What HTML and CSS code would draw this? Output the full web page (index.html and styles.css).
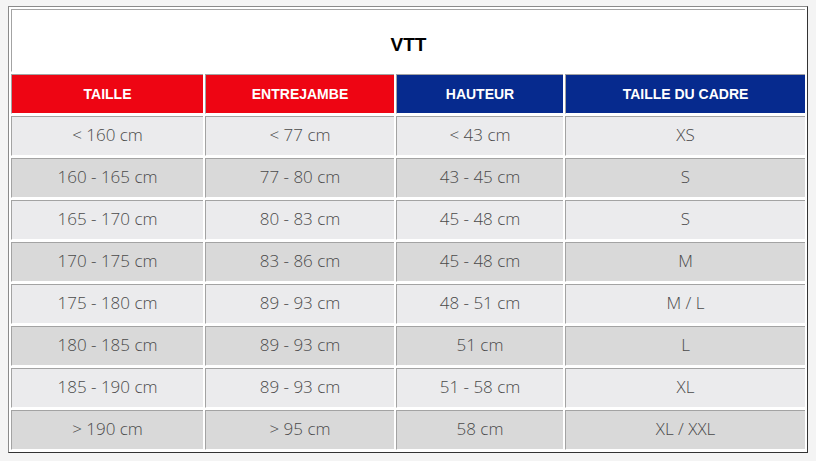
FILE: index.html
```html
<!DOCTYPE html>
<html lang="fr">
<head>
<meta charset="utf-8">
<title>VTT</title>
<link rel="stylesheet" href="styles.css">
</head>
<body>
<table class="sizes">
  <colgroup>
    <col class="c1"><col class="c2"><col class="c3"><col class="c4">
  </colgroup>
  <tr><td class="title" colspan="4">VTT</td></tr>
  <tr class="head">
    <th class="red">TAILLE</th>
    <th class="red">ENTREJAMBE</th>
    <th class="blue">HAUTEUR</th>
    <th class="blue">TAILLE DU CADRE</th>
  </tr>
  <tr class="odd"><td>&lt; 160 cm</td><td>&lt; 77 cm</td><td>&lt; 43 cm</td><td>XS</td></tr>
  <tr class="even"><td>160 - 165 cm</td><td>77 - 80 cm</td><td>43 - 45 cm</td><td>S</td></tr>
  <tr class="odd"><td>165 - 170 cm</td><td>80 - 83 cm</td><td>45 - 48 cm</td><td>S</td></tr>
  <tr class="even"><td>170 - 175 cm</td><td>83 - 86 cm</td><td>45 - 48 cm</td><td>M</td></tr>
  <tr class="odd"><td>175 - 180 cm</td><td>89 - 93 cm</td><td>48 - 51 cm</td><td>M / L</td></tr>
  <tr class="even"><td>180 - 185 cm</td><td>89 - 93 cm</td><td>51 cm</td><td>L</td></tr>
  <tr class="odd"><td>185 - 190 cm</td><td>89 - 93 cm</td><td>51 - 58 cm</td><td>XL</td></tr>
  <tr class="even"><td>&gt; 190 cm</td><td>&gt; 95 cm</td><td>58 cm</td><td>XL / XXL</td></tr>
</table>
</body>
</html>
```
FILE: styles.css
```css
html, body {
  margin: 0;
  background: #f4f4f4;
}
body {
  padding: 6px 0 0 8px;
}
.sizes {
  width: 800px;
  table-layout: fixed;
  border-collapse: separate;
  border-spacing: 2px;
  background: #ffffff;
  border-top: 1px solid #8a8a8a;
  border-left: 1px solid #8a8a8a;
  border-right: 1px solid #333333;
  border-bottom: 1px solid #333333;
}
.c1 { width: 192px; }
.c2 { width: 189px; }
.c3 { width: 167px; }
.c4 { width: 240px; }
.sizes td, .sizes th {
  border-top: 1px solid #a3a3a3;
  border-left: 1px solid #a3a3a3;
  border-bottom: 1px solid #ffffff;
  border-right: 0;
  padding: 0;
  text-align: center;
  vertical-align: middle;
}
.sizes td.title {
  height: 63px;
  padding-top: 8px;
  box-sizing: border-box;
  font-family: "Liberation Sans", Arial, sans-serif;
  font-weight: bold;
  font-size: 19px;
  color: #000;
  background: #fff;
}
.head th {
  height: 38px;
  font-family: "Liberation Sans", Arial, sans-serif;
  font-weight: bold;
  font-size: 14px;
  color: #fff;
}
.red { background: #ee0513; }
.blue { background: #062a8e; }
.odd td, .even td {
  height: 34px;
  padding-bottom: 4px;
  font-family: "Open Sans", sans-serif;
  font-weight: 300;
  font-size: 17px;
  color: #4a4a4a;
}
.odd td { background: #ebebed; }
.even td { background: #d9d9d9; }
```
